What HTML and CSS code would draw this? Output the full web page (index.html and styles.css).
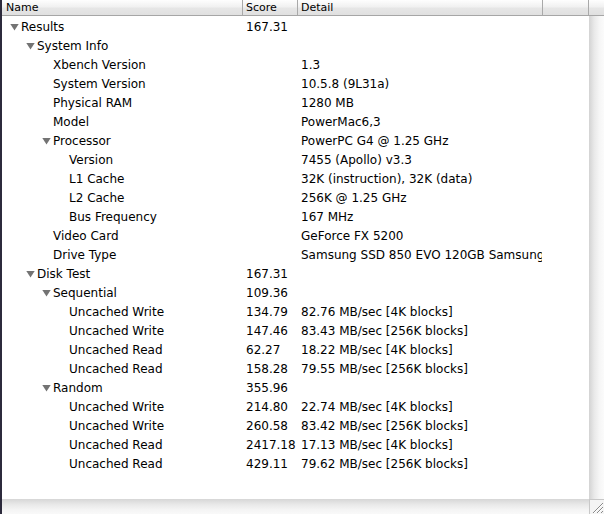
FILE: index.html
```html
<!DOCTYPE html>
<html>
<head>
<meta charset="utf-8">
<link rel="stylesheet" href="styles.css">
</head>
<body>
<div class="outline">
  <div class="head">
    <div class="hcell c-name">Name</div>
    <div class="hcell c-score">Score</div>
    <div class="hcell c-detail">Detail</div>
    <div class="hcell c-rest"></div>
    <div class="hcorner"></div>
  </div>
  <div class="rows">
    <div class="row l0 open"><div class="name"><span class="tog"></span>Results</div><div class="score">167.31</div><div class="detail"></div></div>
    <div class="row l1 open"><div class="name"><span class="tog"></span>System Info</div><div class="score"></div><div class="detail"></div></div>
    <div class="row l2"><div class="name"><span class="tog"></span>Xbench Version</div><div class="score"></div><div class="detail">1.3</div></div>
    <div class="row l2"><div class="name"><span class="tog"></span>System Version</div><div class="score"></div><div class="detail">10.5.8 (9L31a)</div></div>
    <div class="row l2"><div class="name"><span class="tog"></span>Physical RAM</div><div class="score"></div><div class="detail">1280 MB</div></div>
    <div class="row l2"><div class="name"><span class="tog"></span>Model</div><div class="score"></div><div class="detail">PowerMac6,3</div></div>
    <div class="row l2 open"><div class="name"><span class="tog"></span>Processor</div><div class="score"></div><div class="detail">PowerPC G4 @ 1.25 GHz</div></div>
    <div class="row l3"><div class="name"><span class="tog"></span>Version</div><div class="score"></div><div class="detail">7455 (Apollo) v3.3</div></div>
    <div class="row l3"><div class="name"><span class="tog"></span>L1 Cache</div><div class="score"></div><div class="detail">32K (instruction), 32K (data)</div></div>
    <div class="row l3"><div class="name"><span class="tog"></span>L2 Cache</div><div class="score"></div><div class="detail">256K @ 1.25 GHz</div></div>
    <div class="row l3"><div class="name"><span class="tog"></span>Bus Frequency</div><div class="score"></div><div class="detail">167 MHz</div></div>
    <div class="row l2"><div class="name"><span class="tog"></span>Video Card</div><div class="score"></div><div class="detail">GeForce FX 5200</div></div>
    <div class="row l2"><div class="name"><span class="tog"></span>Drive Type</div><div class="score"></div><div class="detail">Samsung SSD 850 EVO 120GB Samsung SSD</div></div>
    <div class="row l1 open"><div class="name"><span class="tog"></span>Disk Test</div><div class="score">167.31</div><div class="detail"></div></div>
    <div class="row l2 open"><div class="name"><span class="tog"></span>Sequential</div><div class="score">109.36</div><div class="detail"></div></div>
    <div class="row l3"><div class="name"><span class="tog"></span>Uncached Write</div><div class="score">134.79</div><div class="detail">82.76 MB/sec [4K blocks]</div></div>
    <div class="row l3"><div class="name"><span class="tog"></span>Uncached Write</div><div class="score">147.46</div><div class="detail">83.43 MB/sec [256K blocks]</div></div>
    <div class="row l3"><div class="name"><span class="tog"></span>Uncached Read</div><div class="score">62.27</div><div class="detail">18.22 MB/sec [4K blocks]</div></div>
    <div class="row l3"><div class="name"><span class="tog"></span>Uncached Read</div><div class="score">158.28</div><div class="detail">79.55 MB/sec [256K blocks]</div></div>
    <div class="row l2 open"><div class="name"><span class="tog"></span>Random</div><div class="score">355.96</div><div class="detail"></div></div>
    <div class="row l3"><div class="name"><span class="tog"></span>Uncached Write</div><div class="score">214.80</div><div class="detail">22.74 MB/sec [4K blocks]</div></div>
    <div class="row l3"><div class="name"><span class="tog"></span>Uncached Write</div><div class="score">260.58</div><div class="detail">83.42 MB/sec [256K blocks]</div></div>
    <div class="row l3"><div class="name"><span class="tog"></span>Uncached Read</div><div class="score">2417.18</div><div class="detail">17.13 MB/sec [4K blocks]</div></div>
    <div class="row l3"><div class="name"><span class="tog"></span>Uncached Read</div><div class="score">429.11</div><div class="detail">79.62 MB/sec [256K blocks]</div></div>
  </div>
  <div class="vscroll"></div>
  <div class="hscroll"></div>
  <div class="grip">
    <svg width="15" height="15" viewBox="0 0 15 15">
      <path d="M14 4 L4 14 M14 8 L8 14 M14 12 L12 14" stroke="#8a8a8a" stroke-width="1" fill="none"/>
      <path d="M14 5 L5 14 M14 9 L9 14" stroke="#ffffff" stroke-width="1" fill="none"/>
    </svg>
  </div>
</div>
</body>
</html>
```
FILE: styles.css
```css
html, body {
  margin: 0;
  padding: 0;
  background: #ffffff;
}

.outline {
  width: 604px;
  height: 514px;
  box-sizing: border-box;
  border-left: 2px solid #2c2a3c;
  display: grid;
  grid-template-columns: 587px 15px;
  grid-template-rows: 16px 483px 15px;
  font-family: "DejaVu Sans", sans-serif;
  color: #000;
  overflow: hidden;
}

/* column header */
.head {
  grid-column: 1 / 3;
  display: grid;
  grid-template-columns: 241px 55px 245px 46px 15px;
  background: linear-gradient(#fefefe 0%, #f1f1f1 45%, #e6e6e6 55%, #e0e0e0 100%);
  border-bottom: 1px solid #a6a6a6;
  font-size: 11px;
  line-height: 15px;
}

.hcell {
  border-right: 1px solid #a9a9a9;
  padding-left: 3px;
  white-space: nowrap;
  overflow: hidden;
}

.hcell.c-name { padding-left: 4px; }

/* outline rows */
.rows {
  padding-top: 2px;
  font-size: 12px;
  overflow: hidden;
}

.row {
  display: grid;
  grid-template-columns: 241px 55px 244px;
  height: 19px;
  line-height: 19px;
  white-space: nowrap;
}

.row > div { overflow: hidden; }

.name {
  display: flex;
  align-items: center;
  padding-left: 8px;
}

.l1 .name { padding-left: 24px; }
.l2 .name { padding-left: 40px; }
.l3 .name { padding-left: 56px; }

.tog {
  flex: none;
  width: 9px;
  height: 7px;
  margin-right: 2px;
  margin-top: -1px;
}

.open .tog {
  background: #737373;
  clip-path: polygon(0 0, 100% 0, 50% 100%);
}

.score {
  padding: 0 5px 0 3px;
}

.detail {
  padding-left: 3px;
}

/* scroll bars */
.vscroll {
  background: linear-gradient(to right, #d3d3d3 0%, #e9e9e9 35%, #f6f6f6 70%, #fbfbfb 100%);
}

.hscroll {
  background: linear-gradient(#d6d6d6 0%, #e8e8e8 35%, #f4f4f4 70%, #f9f9f9 100%);
}

.grip {
  background: #f4f4f4;
  border-left: 1px solid #c8c8c8;
  border-top: 1px solid #c8c8c8;
  box-sizing: border-box;
}

.grip svg { display: block; margin: -1px 0 0 -1px; }
```
